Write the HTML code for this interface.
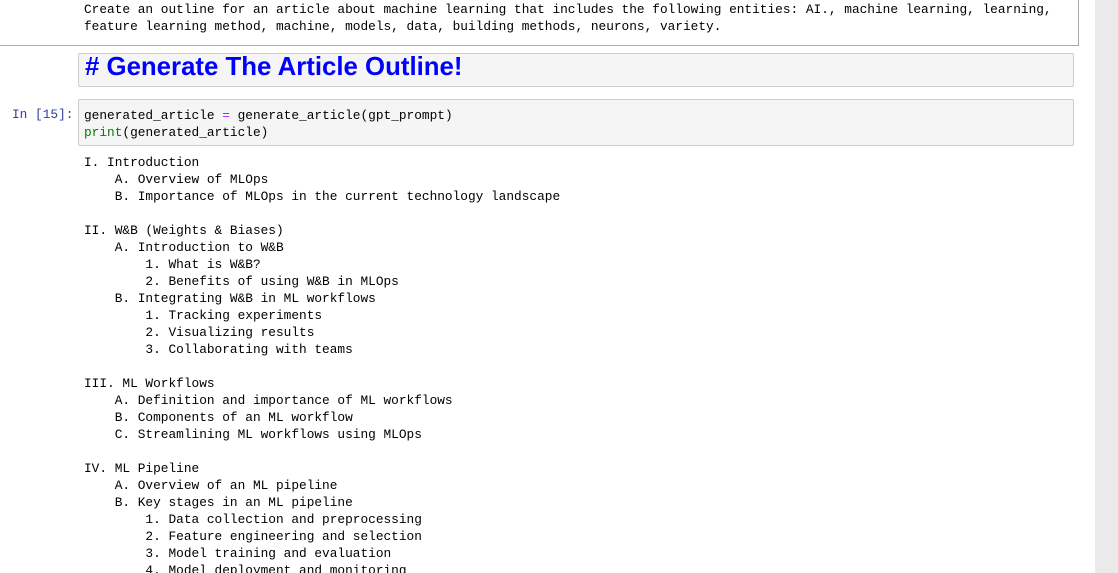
<!DOCTYPE html>
<html><head><meta charset="utf-8"><style>
html,body{margin:0;padding:0;width:1118px;height:573px;overflow:hidden;background:#fff;}
body{position:relative;font-family:"Liberation Mono",monospace;font-size:12.8px;color:#000;}
.sb{position:absolute;left:1095px;top:0;width:23px;height:573px;background:#eaeaea;}
.top{position:absolute;left:-2px;top:-5px;width:1080px;height:50px;border:1px solid #ababab;border-top:none;border-left:none;background:#fff;}
pre{margin:0;font-family:inherit;font-size:inherit;line-height:17px;white-space:pre;}
.t1{position:absolute;left:84px;top:1px;}
.h{position:absolute;left:78px;top:53px;width:994px;height:32px;background:#f5f5f5;border:1px solid #cfcfcf;border-radius:2px;}
.h span{position:absolute;left:6px;top:-3px;font-family:"Liberation Sans",sans-serif;font-weight:bold;font-size:25.8px;color:#0000ff;line-height:32px;}
.c{position:absolute;left:78px;top:99px;width:994px;height:45px;background:#f5f5f5;border:1px solid #cfcfcf;border-radius:2px;}
.c pre{position:absolute;left:5px;top:7px;}
.prompt{position:absolute;left:12px;top:106px;color:#303f9f;line-height:17px;}
.o{position:absolute;left:84px;top:154px;}
.eq{color:#aa22ff;}
.bi{color:#008000;}
</style></head><body>
<div class="top"></div>
<pre class="t1">Create an outline for an article about machine learning that includes the following entities: AI., machine learning, learning,
feature learning method, machine, models, data, building methods, neurons, variety.</pre>
<div class="h"><span># Generate The Article Outline!</span></div>
<div class="prompt">In [15]:</div>
<div class="c"><pre>generated_article <span class="eq">=</span> generate_article(gpt_prompt)
<span class="bi">print</span>(generated_article)</pre></div>
<pre class="o">I. Introduction
    A. Overview of MLOps
    B. Importance of MLOps in the current technology landscape

II. W&amp;B (Weights &amp; Biases)
    A. Introduction to W&amp;B
        1. What is W&amp;B?
        2. Benefits of using W&amp;B in MLOps
    B. Integrating W&amp;B in ML workflows
        1. Tracking experiments
        2. Visualizing results
        3. Collaborating with teams

III. ML Workflows
    A. Definition and importance of ML workflows
    B. Components of an ML workflow
    C. Streamlining ML workflows using MLOps

IV. ML Pipeline
    A. Overview of an ML pipeline
    B. Key stages in an ML pipeline
        1. Data collection and preprocessing
        2. Feature engineering and selection
        3. Model training and evaluation
        4. Model deployment and monitoring</pre>
<div class="sb"></div>
</body></html>
